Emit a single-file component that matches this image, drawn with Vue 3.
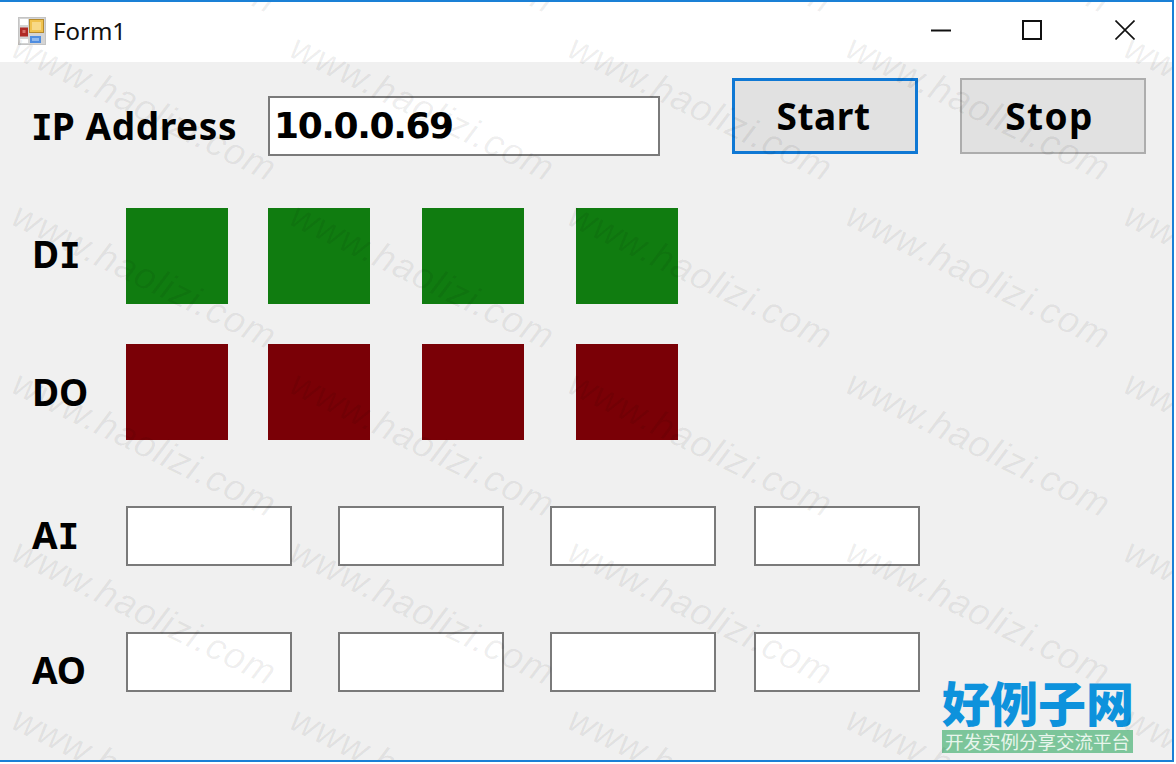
<script setup>
const diLeds = [1, 2, 3, 4]
const doLeds = [1, 2, 3, 4]
const aiBoxes = ['', '', '', '']
const aoBoxes = ['', '', '', '']

// watermark grid, one stamp every 278 x 168 px
const stamps = []
for (let row = 0; row < 6; row++) {
  for (let col = 0; col < 6; col++) {
    stamps.push({ id: row + '-' + col, left: col * 278 + 24, top: row * 168 - 144 })
  }
}
</script>

<template>
  <div class="window">
    <header class="titlebar">
      <svg class="app-icon" width="28" height="28" viewBox="0 0 28 28">
        <rect x="0.5" y="0.5" width="27" height="27" fill="#d4d4d4" stroke="#c4c4c4" />
        <rect x="2" y="2" width="8" height="6" fill="#fff" />
        <rect x="2" y="10.5" width="8" height="9" fill="#b02a26" />
        <rect x="4.5" y="13" width="3" height="3" fill="#d8706a" />
        <rect x="11.5" y="2.5" width="14" height="13" fill="#f0c24e" stroke="#b58a2c" />
        <rect x="14" y="5" width="9" height="8" fill="#f8d987" />
        <rect x="2" y="22" width="8" height="4" fill="#fff" />
        <rect x="12" y="19" width="11" height="7" fill="#4f8de0" />
        <rect x="14" y="21" width="7" height="3" fill="#8fb8ec" />
      </svg>
      <span class="title">Form1</span>
      <div class="caption-buttons">
        <svg width="20" height="20" viewBox="0 0 20 20"><path d="M0 10.5H20" stroke="#111" stroke-width="2" /></svg>
        <svg class="max-icon" width="20" height="20" viewBox="0 0 20 20"><rect x="1" y="1" width="18" height="18" fill="none" stroke="#111" stroke-width="2" /></svg>
        <svg width="20" height="20" viewBox="0 0 20 20"><path d="M0.5 0.5L19.5 19.5M19.5 0.5L0.5 19.5" stroke="#111" stroke-width="1.6" /></svg>
      </div>
    </header>

    <main class="form">
      <div class="top-row">
        <label class="lbl ip-label"><span class="serif-i">I</span>P Address</label>
        <div class="ip-box">10.0.0.69</div>
        <button class="btn btn-start">Start</button>
        <button class="btn btn-stop">Stop</button>
      </div>

      <div class="led-row di-row">
        <label class="lbl row-label di-label">D<span class="serif-i">I</span></label>
        <div class="led-grid">
          <div v-for="n in diLeds" :key="n" class="led green"></div>
        </div>
      </div>

      <div class="led-row do-row">
        <label class="lbl row-label">DO</label>
        <div class="led-grid">
          <div v-for="n in doLeds" :key="n" class="led red"></div>
        </div>
      </div>

      <div class="val-row ai-row">
        <label class="lbl row-label">A<span class="serif-i">I</span></label>
        <div class="val-grid">
          <div v-for="(v, i) in aiBoxes" :key="i" class="val-box">{{ v }}</div>
        </div>
      </div>

      <div class="val-row ao-row">
        <label class="lbl row-label ao-label">AO</label>
        <div class="val-grid">
          <div v-for="(v, i) in aoBoxes" :key="i" class="val-box">{{ v }}</div>
        </div>
      </div>
    </main>

    <div class="logo">
      <div class="logo-name">好例子网</div>
      <div class="logo-sub">开发实例分享交流平台</div>
    </div>

    <div class="watermarks">
      <span
        v-for="s in stamps"
        :key="s.id"
        class="stamp"
        :style="{ left: s.left + 'px', top: s.top + 'px' }"
      >www.haolizi.com</span>
    </div>
  </div>
</template>

<style>
html, body {
  margin: 0;
  background: #fff;
}
</style>

<style scoped>
.window {
  position: relative;
  width: 1174px;
  height: 762px;
  box-sizing: border-box;
  border-top: 2px solid #1a80d6;
  border-right: 2px solid #1a80d6;
  border-bottom: 2px solid #1a80d6;
  background: #f0f0f0;
  overflow: hidden;
  font-family: "Noto Sans", "DejaVu Sans", sans-serif;
  color: #000;
}

.titlebar {
  height: 60px;
  background: #fff;
  display: flex;
  align-items: center;
  padding-left: 18px;
}

.app-icon {
  margin-bottom: 2px;
}

.title {
  font-family: "Noto Sans", "Open Sans", sans-serif;
  font-size: 24px;
  margin-left: 7px;
  margin-top: -4px;
  color: #111;
}

.caption-buttons {
  margin-left: auto;
  margin-right: 37px;
  margin-bottom: 4px;
  display: flex;
  gap: 72px;
}

.max-icon {
  margin-left: -1px;
  margin-right: 1px;
}

.form {
  padding-left: 33px;
}

.lbl {
  font-weight: bold;
  font-size: 37px;
  line-height: 40px;
}

.serif-i {
  font-family: "DejaVu Sans Mono", monospace;
  font-size: 36px;
  letter-spacing: -1px;
}

.top-row {
  display: flex;
  align-items: flex-start;
  padding-top: 16px;
  height: 130px;
  box-sizing: border-box;
}

.ip-label {
  width: 237px;
  flex: none;
  margin-left: -2px;
  margin-top: 28px;
  letter-spacing: 0.6px;
  white-space: nowrap;
}

.ip-box {
  width: 392px;
  height: 60px;
  margin-top: 18px;
  box-sizing: border-box;
  border: 2px solid #7a7a7a;
  background: #fff;
  font-family: "DejaVu Sans", sans-serif;
  font-weight: bold;
  font-size: 36px;
  letter-spacing: -1.4px;
  line-height: 55px;
  padding-left: 4px;
}

.btn {
  width: 186px;
  height: 76px;
  box-sizing: border-box;
  background: #e1e1e1;
  font-family: inherit;
  font-weight: bold;
  font-size: 37px;
  color: #000;
}

.btn-start {
  margin-left: 72px;
  border: 3px solid #0f78d4;
  letter-spacing: 0.6px;
  padding: 0 3px 2px 0;
}

.btn-stop {
  margin-left: 42px;
  border: 2px solid #adadad;
  letter-spacing: 1.4px;
  padding: 0 7px 2px 0;
}

.led-row {
  display: flex;
  align-items: center;
  height: 96px;
}

.di-row {
  margin-top: 16px;
}

.do-row {
  margin-top: 40px;
}

.row-label {
  width: 94px;
  flex: none;
  margin-left: -1px;
}

.di-label {
  margin-bottom: 3px;
}

.ao-label {
  margin-top: 16px;
}

.led-grid {
  display: grid;
  grid-template-columns: 142px 154px 154px 102px;
  height: 96px;
}

.led {
  width: 102px;
}

.green {
  background: #107c10;
}

.red {
  background: #7a0006;
}

.val-row {
  display: flex;
  align-items: center;
  height: 60px;
}

.ai-row {
  margin-top: 66px;
}

.ao-row {
  margin-top: 66px;
}

.val-grid {
  display: grid;
  grid-template-columns: 212px 212px 204px 166px;
}

.val-box {
  width: 166px;
  height: 60px;
  box-sizing: border-box;
  border: 2px solid #7a7a7a;
  background: #fff;
}

.logo {
  position: absolute;
  left: 942px;
  top: 672px;
  width: 191px;
}

.logo-name {
  font-family: "Noto Sans CJK SC", sans-serif;
  font-weight: 900;
  font-size: 48px;
  line-height: 54px;
  color: #0d92dc;
  white-space: nowrap;
}

.logo-sub {
  background: #7cc59a;
  color: #e8f5ec;
  font-family: "Noto Sans CJK SC", sans-serif;
  font-size: 18.5px;
  line-height: 23px;
  height: 23px;
  white-space: nowrap;
  text-align: center;
  margin-top: 2px;
}

.watermarks {
  position: absolute;
  inset: 0;
  pointer-events: none;
  overflow: hidden;
}

.stamp {
  position: absolute;
  font-family: "Liberation Sans", Arial, sans-serif;
  font-style: italic;
  font-size: 37px;
  letter-spacing: 1px;
  color: rgba(0, 0, 0, 0.065);
  transform-origin: 0 0;
  transform: rotate(26deg);
  white-space: nowrap;
}
</style>
